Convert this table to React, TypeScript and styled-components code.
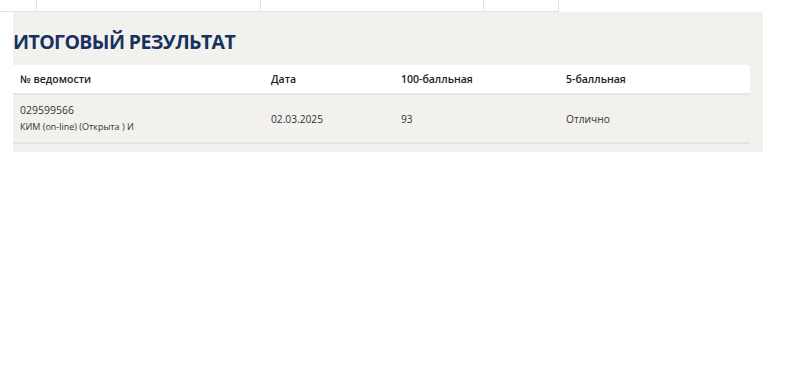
import React from "react";
import styled, { createGlobalStyle } from "styled-components";

const Global = createGlobalStyle`
  html, body { margin: 0; padding: 0; background: #ffffff; }
  body { font-family: "Open Sans", "Noto Sans", sans-serif; color: #333; }
`;

const Page = styled.div`
  width: 800px;
  height: 376px;
  background: #ffffff;
`;

const TabStrip = styled.div`
  display: flex;
  height: 11px;
  width: 559px;
  border-bottom: 1px solid #e2e1de;
`;

const TabCell = styled.div<{ $w: number }>`
  width: ${(p) => p.$w}px;
  flex: none;
  border-right: 1px solid #e2e1de;
  box-sizing: border-box;
`;

const Panel = styled.section`
  margin-left: 13px;
  width: 750px;
  height: 140px;
  background: #f2f1ee;
  box-sizing: border-box;
  padding-top: 18px;
`;

const Title = styled.h2`
  margin: 0;
  font-family: "Open Sans", sans-serif;
  font-weight: 700;
  font-size: 19.5px;
  line-height: 24px;
  color: #17325e;
  letter-spacing: -0.6px;
`;

const Table = styled.div`
  margin-top: 11px;
  width: 737px;
`;

const cols = "251px 130px 165px 191px";

const HeadRow = styled.div`
  display: grid;
  grid-template-columns: ${cols};
  height: 28px;
  align-items: center;
  background: #ffffff;
  border-radius: 0 4px 0 0;
  border-bottom: 2px solid #e9e7e3;
`;

const HeadCell = styled.div`
  padding-left: 7px;
  font-size: 10.5px;
  font-weight: 600;
  color: #222;
`;

const BodyRow = styled.div`
  display: grid;
  grid-template-columns: ${cols};
  height: 47px;
  align-items: center;
  border-bottom: 2px solid #e6e4e0;
`;

const Cell = styled.div`
  padding-left: 7px;
  font-size: 10.2px;
  color: #333;
`;

const Main = styled.div`
  font-size: 10.5px;
  line-height: 15px;
`;

const Sub = styled.div`
  font-size: 9px;
  line-height: 14px;
  margin-top: 2px;
`;

export default function App() {
  return (
    <Page>
      <Global />
      <TabStrip>
        <TabCell $w={37} />
        <TabCell $w={224} />
        <TabCell $w={223} />
        <TabCell $w={75} />
      </TabStrip>
      <Panel>
        <Title>ИТОГОВЫЙ РЕЗУЛЬТАТ</Title>
        <Table>
          <HeadRow>
            <HeadCell>№ ведомости</HeadCell>
            <HeadCell>Дата</HeadCell>
            <HeadCell>100-балльная</HeadCell>
            <HeadCell>5-балльная</HeadCell>
          </HeadRow>
          <BodyRow>
            <Cell>
              <Main>029599566</Main>
              <Sub>КИМ (on-line) (Открыта ) И</Sub>
            </Cell>
            <Cell>02.03.2025</Cell>
            <Cell>93</Cell>
            <Cell>Отлично</Cell>
          </BodyRow>
        </Table>
      </Panel>
    </Page>
  );
}
